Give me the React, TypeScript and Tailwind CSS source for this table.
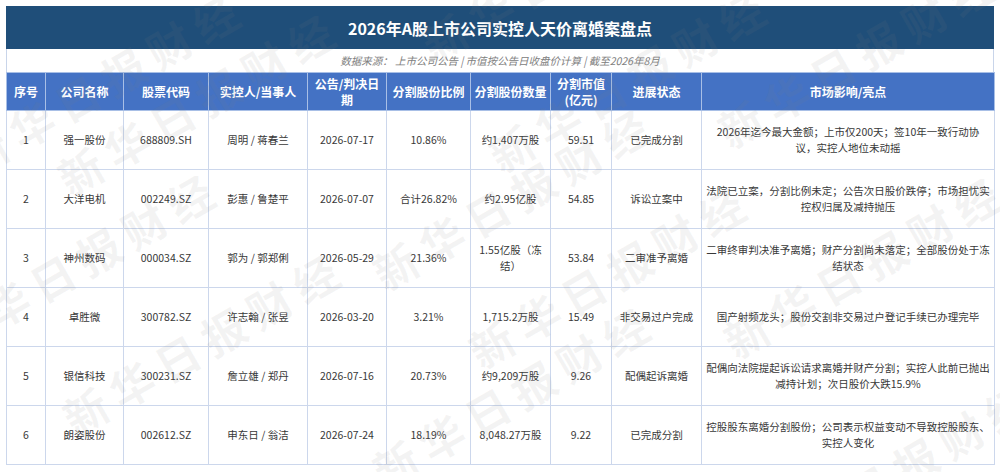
import React from "react";

interface Case {
  no: number;
  name: string;
  code: string;
  people: string;
  date: string;
  ratio: string;
  shares: string;
  value: string;
  status: string;
  impact: string;
}

const cases: Case[] = [
  { no: 1, name: "强一股份", code: "688809.SH", people: "周明 / 蒋春兰", date: "2026-07-17", ratio: "10.86%", shares: "约1,407万股", value: "59.51", status: "已完成分割", impact: "2026年迄今最大金额；上市仅200天；签10年一致行动协\n议，实控人地位未动摇" },
  { no: 2, name: "大洋电机", code: "002249.SZ", people: "彭惠 / 鲁楚平", date: "2026-07-07", ratio: "合计26.82%", shares: "约2.95亿股", value: "54.85", status: "诉讼立案中", impact: "法院已立案，分割比例未定；公告次日股价跌停；市场担忧实\n控权归属及减持抛压" },
  { no: 3, name: "神州数码", code: "000034.SZ", people: "郭为 / 郭郑俐", date: "2026-05-29", ratio: "21.36%", shares: "1.55亿股（冻\n结）", value: "53.84", status: "二审准予离婚", impact: "二审终审判决准予离婚；财产分割尚未落定；全部股份处于冻\n结状态" },
  { no: 4, name: "卓胜微", code: "300782.SZ", people: "许志翰 / 张昱", date: "2026-03-20", ratio: "3.21%", shares: "1,715.2万股", value: "15.49", status: "非交易过户完成", impact: "国产射频龙头；股份交割非交易过户登记手续已办理完毕" },
  { no: 5, name: "银信科技", code: "300231.SZ", people: "詹立雄 / 郑丹", date: "2026-07-16", ratio: "20.73%", shares: "约9,209万股", value: "9.26", status: "配偶起诉离婚", impact: "配偶向法院提起诉讼请求离婚并财产分割；实控人此前已抛出\n减持计划；次日股价大跌15.9%" },
  { no: 6, name: "朗姿股份", code: "002612.SZ", people: "申东日 / 翁洁", date: "2026-07-24", ratio: "18.19%", shares: "8,048.27万股", value: "9.22", status: "已完成分割", impact: "控股股东离婚分割股份；公司表示权益变动不导致控股股东、\n实控人变化" },
];

const headers = [
  { label: "序号", w: "w-[39px]" },
  { label: "公司名称", w: "w-[78px]" },
  { label: "股票代码", w: "w-[85px]" },
  { label: "实控人/当事人", w: "w-[99px]" },
  { label: "公告/判决日\n期", w: "w-[79px]" },
  { label: "分割股份比例", w: "w-[84px]" },
  { label: "分割股份数量", w: "w-[80px]" },
  { label: "分割市值\n(亿元)", w: "w-[61px]" },
  { label: "进展状态", w: "w-[90px]" },
  { label: "市场影响/亮点", w: "w-[293px]" },
];

// watermark start points (left, top) of each rotated "新华日报财经"
const marks = [
  { left: -45, top: 142 },
  { left: 50, top: 162 },
  { left: -70, top: 322 },
  { left: 55, top: 402 },
  { left: 414, top: 28 },
  { left: 481, top: 139 },
  { left: 365, top: 257 },
  { left: 461, top: 335 },
  { left: 365, top: 455 },
  { left: 710, top: 115 },
  { left: 716, top: 325 },
  { left: 747, top: 532 },
];

function Watermark() {
  return (
    <div className="absolute inset-0 pointer-events-none overflow-hidden" aria-hidden="true">
      {marks.map((m, i) => (
        <div
          key={i}
          className="absolute origin-top-left -rotate-[30deg] whitespace-nowrap text-[44px] leading-[44px] font-bold tracking-[9px] text-[#808080]/[0.09]"
          style={{ left: m.left, top: m.top }}
        >
          新华日报财经
        </div>
      ))}
    </div>
  );
}

export default function App() {
  return (
    <div className="relative w-[1000px] h-[472px] bg-white overflow-hidden px-[6px] pt-[6px] font-['Noto_Sans_CJK_SC','Noto_Sans',sans-serif] text-[#383838]">
      <div className="w-[988px]">
        <div className="h-[43px] bg-[#1f4e79] flex items-center justify-center text-white font-bold text-[16px]">
          2026年A股上市公司实控人天价离婚案盘点
        </div>
        <div className="h-[23px] border-x border-[#c9d5ea] flex items-center justify-center italic text-[10.5px] text-[#808080]">
          数据来源： 上市公司公告 | 市值按公告日收盘价计算 | 截至2026年8月
        </div>
        <table className="table-fixed border-collapse w-[988px]">
          <colgroup>
            {headers.map((h, i) => (
              <col key={i} className={h.w} />
            ))}
          </colgroup>
          <thead>
            <tr className="h-[38px] bg-[#4472c4]">
              {headers.map((h, i) => (
                <th
                  key={i}
                  className="border border-[#a8bfe6] text-white font-bold text-[12px] leading-[16px] whitespace-pre-line text-center p-0"
                >
                  {h.label}
                </th>
              ))}
            </tr>
          </thead>
          <tbody>
            {cases.map((c) => (
              <tr key={c.no} className="h-[59px] text-[10.5px] leading-[16px] text-center">
                <td className="border border-[#ccd7ec]">{c.no}</td>
                <td className="border border-[#ccd7ec]">{c.name}</td>
                <td className="border border-[#ccd7ec]">{c.code}</td>
                <td className="border border-[#ccd7ec]">{c.people}</td>
                <td className="border border-[#ccd7ec]">{c.date}</td>
                <td className="border border-[#ccd7ec]">{c.ratio}</td>
                <td className="border border-[#ccd7ec] whitespace-pre-line">{c.shares}</td>
                <td className="border border-[#ccd7ec]">{c.value}</td>
                <td className="border border-[#ccd7ec]">{c.status}</td>
                <td className="border border-[#ccd7ec] whitespace-pre-line px-1">{c.impact}</td>
              </tr>
            ))}
          </tbody>
        </table>
      </div>
      <Watermark />
    </div>
  );
}
